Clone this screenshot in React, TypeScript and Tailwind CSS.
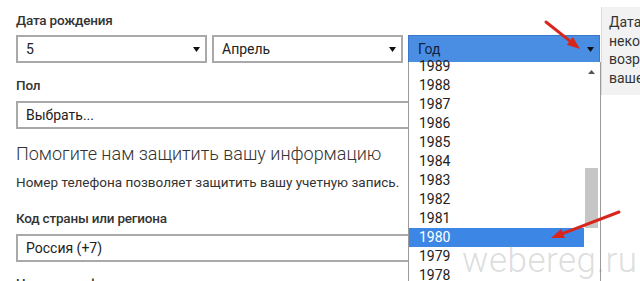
import type { ReactNode } from "react";

const years = [1989, 1988, 1987, 1986, 1985, 1984, 1983, 1982, 1981, 1980, 1979, 1978, 1977];

function Caret() {
  return (
    <svg width="7" height="5" viewBox="0 0 7 5" className="shrink-0">
      <path d="M0 0h7L3.5 5z" fill="#111" />
    </svg>
  );
}

function Select({ children, caret = true, className = "" }: { children: ReactNode; caret?: boolean; className?: string }) {
  return (
    <div
      className={`flex h-[28px] items-center justify-between border-2 border-[#a9a9a9] bg-white pl-[8px] pr-[5px] text-[14px] text-[#222] ${className}`}
    >
      <span>{children}</span>
      {caret && <Caret />}
    </div>
  );
}

function Arrow({ x1, y1, x2, y2 }: { x1: number; y1: number; x2: number; y2: number }) {
  const a = Math.atan2(y2 - y1, x2 - x1);
  const len = 13;
  const w = 5;
  const bx = x2 - Math.cos(a) * len;
  const by = y2 - Math.sin(a) * len;
  const px = -Math.sin(a) * w;
  const py = Math.cos(a) * w;
  return (
    <g>
      <line x1={x1} y1={y1} x2={bx} y2={by} stroke="#d9261c" strokeWidth="3" strokeLinecap="round" />
      <path d={`M${x2} ${y2}L${bx + px} ${by + py}L${bx - px} ${by - py}Z`} fill="#d9261c" />
    </g>
  );
}

export default function App() {
  return (
    <div className="relative h-[281px] w-[640px] overflow-hidden bg-white font-['Roboto',sans-serif] text-[#222]">
      <div className="w-[600px] pl-[16px] pt-[10px]">
        <div className="text-[13.5px] leading-[20px] font-medium tracking-[-0.2px] text-[#333]">Дата рождения</div>
        <div className="mt-[5px] flex gap-[5px]">
          <Select className="w-[191px]">5</Select>
          <Select className="w-[191px]">Апрель</Select>
          <div className="flex h-[28px] w-[192px] items-center justify-between border border-[#3a78cc] bg-[#4a8ee4] pl-[9px] pr-[5px] text-[14px] text-[#10223f]">
            <span>Год</span>
            <Caret />
          </div>
        </div>

        <div className="mt-[12px] text-[13.5px] leading-[20px] font-medium tracking-[-0.2px] text-[#333]">Пол</div>
        <Select caret={false} className="mt-[6px] w-[584px]">
          Выбрать...
        </Select>

        <h2 className="mt-[12px] text-[18px] leading-[26px] font-light text-[#333]">
          Помогите нам защитить вашу информацию
        </h2>
        <p className="mt-[5px] text-[13.5px] leading-[20px] text-[#333]">
          Номер телефона позволяет защитить вашу учетную запись.
        </p>

        <div className="mt-[16px] text-[13.5px] leading-[20px] font-medium tracking-[-0.2px] text-[#333]">
          Код страны или региона
        </div>
        <Select caret={false} className="mt-[6px] w-[584px]">
          Россия (+7)
        </Select>

        <div className="mt-[11px] text-[13.5px] leading-[20px] font-medium tracking-[-0.2px] text-[#333]">
          Номер телефона
        </div>
      </div>

      {/* year dropdown */}
      <div className="absolute left-[408px] top-[62px] flex h-[230px] w-[193px] border-x border-[#9a9a9a] bg-white">
        <div className="-mt-[5px] flex-1">
          {years.map((y) => (
            <div
              key={y}
              className={`h-[19px] pl-[10px] text-[14px] leading-[19px] ${
                y === 1980 ? "bg-[#3c87e6] text-white" : "text-[#222]"
              }`}
            >
              {y}
            </div>
          ))}
        </div>
        <div className="relative w-[16px] bg-white">
          <svg width="7" height="4" viewBox="0 0 7 4" className="absolute left-[4px] top-[8px]">
            <path d="M0 4h7L3.5 0z" fill="#555" />
          </svg>
          <div className="absolute left-[1px] top-[106px] h-[60px] w-[13px] bg-[#c6c6c6]" />
        </div>
      </div>

      {/* tooltip */}
      <div className="absolute left-[601px] top-[7px] h-[88px] w-[240px] border-l border-[#dcdcdc] bg-[#f2f2f2] pl-[7px] pt-[6px] text-[14px] leading-[18.5px] text-[#333]">
        <div className="whitespace-nowrap">Дата рождения</div>
        <div className="whitespace-nowrap">некоторых служб</div>
        <div className="whitespace-nowrap">возрастные</div>
        <div className="whitespace-nowrap">вашей</div>
      </div>

      <svg className="pointer-events-none absolute left-0 top-0" width="640" height="281">
        <Arrow x1={546} y1={22} x2={580} y2={49} />
        <Arrow x1={619} y1={212} x2={551} y2={238} />
      </svg>

      <div className="pointer-events-none absolute left-[462px] top-[240px] text-[35px] leading-[42px] font-light tracking-[0.5px] text-[#8a8a8a]/30">
        webereg.ru
      </div>
    </div>
  );
}
